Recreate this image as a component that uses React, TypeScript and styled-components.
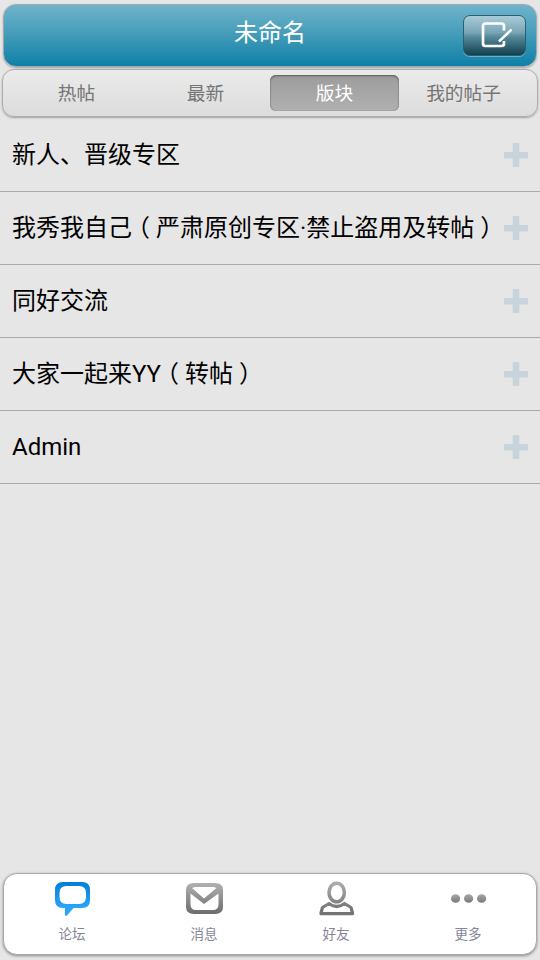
import React from "react";
import styled, { createGlobalStyle } from "styled-components";

const GlobalStyle = createGlobalStyle`
  * { box-sizing: border-box; }
  html, body { margin: 0; padding: 0; }
  body {
    background: #e6e6e6;
    font-family: Roboto, "Noto Sans CJK SC", sans-serif;
  }
`;

const Screen = styled.div`
  width: 540px;
  height: 960px;
  display: flex;
  flex-direction: column;
  overflow: hidden;
  background: #e6e6e6;
`;

const Header = styled.header`
  flex: none;
  display: grid;
  grid-template-columns: 1fr auto 1fr;
  align-items: start;
  height: 63px;
  margin: 4px 3px 0;
  border: 1px solid #a3a8ab;
  border-radius: 13px;
  background: linear-gradient(#6fb3cc, #4a9fbb 42%, #0e80a7);
  box-shadow: 0 1px 2px rgba(0, 0, 0, 0.3);
`;

const Title = styled.h1`
  grid-column: 2;
  margin: 11px 0 0;
  font-size: 24px;
  line-height: 34px;
  font-weight: 400;
  color: #fff;
`;

const ComposeButton = styled.button`
  justify-self: end;
  display: flex;
  justify-content: center;
  align-items: center;
  width: 63px;
  height: 41px;
  margin: 10px 10px 0 0;
  padding: 0 0 2px 4px;
  border: 1px solid #29606f;
  border-radius: 7px;
  background: linear-gradient(#aacbd8, #7aa5b4 42%, #55889a 54%, #13414f);
  box-shadow: 0 1px 0 rgba(255, 255, 255, 0.35);
`;

const TabBar = styled.nav`
  flex: none;
  display: grid;
  grid-template-columns: repeat(4, 129px);
  height: 48px;
  margin: 2px 2px 0;
  padding: 5px 9px;
  border: 1px solid #adadad;
  border-radius: 12px;
  background: linear-gradient(#ebebeb, #dcdcdc);
  box-shadow: 0 1px 2px rgba(0, 0, 0, 0.3);
`;

const Tab = styled.div<{ $active?: boolean }>`
  height: 36px;
  padding-top: 1px;
  border-radius: 6px;
  font-size: 18.7px;
  line-height: 36px;
  text-align: center;
  color: ${(p) => (p.$active ? "#fff" : "#757575")};
  background: ${(p) => (p.$active ? "linear-gradient(#9c9c9c, #b0b0b0)" : "none")};
  box-shadow: ${(p) =>
    p.$active ? "inset 0 1px 2px #5c5c5c, inset 0 0 1px #777" : "none"};
`;

const BoardList = styled.main`
  flex: 1;
  padding-top: 2px;
`;

const BoardRow = styled.div`
  display: flex;
  justify-content: space-between;
  align-items: center;
  height: 73px;
  padding: 0 12px;
  border-bottom: 1px solid #a9a9a9;
`;

const BoardName = styled.span`
  font-size: 24px;
  line-height: 36px;
  color: #000;
  white-space: nowrap;
`;

const Bracket = styled.span`
  display: inline-block;
  margin: 0 6px;
  font-feature-settings: "halt";
`;

const BottomBar = styled.footer`
  flex: none;
  display: grid;
  grid-template-columns: repeat(4, 132px);
  height: 82px;
  margin: 0 3px 5px;
  padding-left: 3px;
  border: 1px solid #a9a9a9;
  border-radius: 14px;
  background: #fff;
  box-shadow: 0 1px 3px rgba(0, 0, 0, 0.4);
`;

const BottomItem = styled.div`
  display: flex;
  flex-direction: column;
  align-items: center;
  padding-top: 6px;
`;

const BottomLabel = styled.span`
  margin: 4px 2px 0 0;
  font-size: 13.5px;
  line-height: 20px;
  font-weight: 400;
  color: #85859a;
`;

const Glyph = styled.svg`
  display: block;
  flex: none;
`;

const ComposeIcon = () => (
  <Glyph width="32" height="28" viewBox="0 0 32 28" fill="none" stroke="#fff">
    <path
      d="M23 9.500V5Q23 2.500 20.500 2.500H4.500Q2 2.500 2 5V22.500Q2 25 4.500 25H20.500Q23 25 23 22.500V20"
      strokeWidth="2.700"
    />
    <path d="M18 20.500L30.500 8.500" strokeWidth="2.500" />
  </Glyph>
);

const PlusIcon = () => (
  <Glyph width="24" height="24" viewBox="0 0 24 24" fill="#c8d4db">
    <rect x="0" y="9" width="24" height="6.500" rx="1" />
    <rect x="8.700" y="0" width="6.600" height="24" rx="1" />
  </Glyph>
);

const Shade = ({ id, from, to, y2 }: { id: string; from: string; to: string; y2: number }) => (
  <defs>
    <linearGradient id={id} gradientUnits="userSpaceOnUse" x1="0" y1="2" x2="0" y2={y2}>
      <stop offset="0" stopColor={from} />
      <stop offset="1" stopColor={to} />
    </linearGradient>
  </defs>
);

const ForumIcon = () => (
  <Glyph width="36" height="40" viewBox="0 0 36 40">
    <Shade id="forum" from="#007fd6" to="#2ba5fa" y2={28} />
    <path
      fill="url(#forum)"
      fillRule="evenodd"
      d="M8 2H27Q35 2 35 10V20Q35 28 27 28H18.500L11.500 36L10 35.500V28H8Q0 28 0 20V10Q0 2 8 2ZM11.500 6Q4.500 6 4.500 13V17Q4.500 24 11.500 24H24Q31 24 31 17V13Q31 6 24 6Z"
    />
  </Glyph>
);

const MailIcon = () => (
  <Glyph width="38" height="40" viewBox="1 0 38 40">
    <Shade id="mail" from="#b3b3b3" to="#6c6c6c" y2={34} />
    <path
      fill="url(#mail)"
      fillRule="evenodd"
      d="M9 3H30Q38 3 38 10V27Q38 34 30 34H9Q1 34 1 27V10Q1 3 9 3ZM7 8L19 18.500L31.500 8L29 7H10ZM5.500 13.500V24Q5.500 30 11 30H28Q33.500 30 33.500 24V13.500L19 24Z"
    />
  </Glyph>
);

const FriendIcon = () => (
  <Glyph width="36" height="40" viewBox="0 0 36 40" fill="none" stroke="url(#friend)">
    <Shade id="friend" from="#adadad" to="#747474" y2={30} />
    <ellipse cx="17.700" cy="12.500" rx="7.700" ry="9.300" strokeWidth="3.500" />
    <path
      d="M10 23.500L3.500 27.500L2 33V33.700H33.500V33L32 27.500L25.500 23.500Q17.700 29.500 10 23.500Z"
      strokeWidth="3.200"
      strokeLinejoin="round"
    />
  </Glyph>
);

const MoreIcon = () => (
  <Glyph width="36" height="40" viewBox="0 0 36 40" fill="url(#more)">
    <defs>
      <linearGradient id="more" gradientUnits="userSpaceOnUse" x1="0" y1="14" x2="0" y2="23">
        <stop offset="0" stopColor="#a9aba9" />
        <stop offset="1" stopColor="#757775" />
      </linearGradient>
    </defs>
    <ellipse cx="4.600" cy="18.500" rx="4.600" ry="4.300" />
    <ellipse cx="17.600" cy="18.500" rx="4.600" ry="4.300" />
    <ellipse cx="30.600" cy="18.500" rx="4.600" ry="4.300" />
  </Glyph>
);

const tabs = ["热帖", "最新", "版块", "我的帖子"];

const boards = [
  "新人、晋级专区",
  "我秀我自己（严肃原创专区·禁止盗用及转帖）",
  "同好交流",
  "大家一起来YY（转帖）",
  "Admin",
];

const destinations = [
  { label: "论坛", Icon: ForumIcon },
  { label: "消息", Icon: MailIcon },
  { label: "好友", Icon: FriendIcon },
  { label: "更多", Icon: MoreIcon },
];

// Half-width bracket glyphs with even side margins sit centred in one em.
const centreBrackets = (text: string) =>
  text
    .split(/([（）])/)
    .map((part, i) =>
      part === "（" || part === "）" ? <Bracket key={i}>{part}</Bracket> : part
    );

export default function App() {
  return (
    <>
      <GlobalStyle />
      <Screen>
        <Header>
          <span />
          <Title>未命名</Title>
          <ComposeButton aria-label="compose">
            <ComposeIcon />
          </ComposeButton>
        </Header>
        <TabBar>
          {tabs.map((tab) => (
            <Tab key={tab} $active={tab === "版块"}>
              {tab}
            </Tab>
          ))}
        </TabBar>
        <BoardList>
          {boards.map((board) => (
            <BoardRow key={board}>
              <BoardName>{centreBrackets(board)}</BoardName>
              <PlusIcon />
            </BoardRow>
          ))}
        </BoardList>
        <BottomBar>
          {destinations.map(({ label, Icon }) => (
            <BottomItem key={label}>
              <Icon />
              <BottomLabel>{label}</BottomLabel>
            </BottomItem>
          ))}
        </BottomBar>
      </Screen>
    </>
  );
}
